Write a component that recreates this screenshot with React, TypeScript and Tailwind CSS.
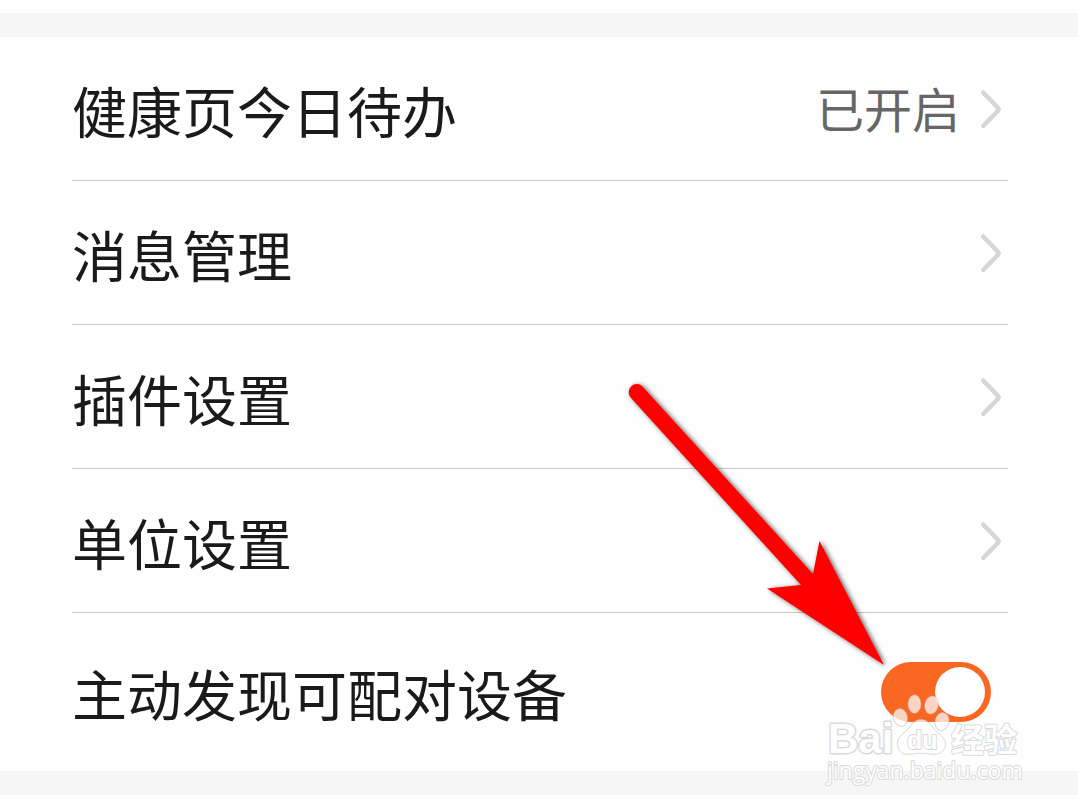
import { useState } from "react";

interface SettingRowProps {
  label: string;
  value?: string;
}

const settings: SettingRowProps[] = [
  { label: "健康页今日待办", value: "已开启" },
  { label: "消息管理" },
  { label: "插件设置" },
  { label: "单位设置" },
];

function Chevron() {
  return (
    <svg
      className="mr-1 h-11 w-7 shrink-0"
      viewBox="0 0 28 44"
      fill="none"
      stroke="#d6d6d6"
      strokeWidth="4.5"
      strokeLinecap="round"
      strokeLinejoin="round"
      aria-hidden="true"
    >
      <path d="M7.2 5.5 L21.8 20.6 Q23.4 22.3 21.8 24 L7.2 39" />
    </svg>
  );
}

function SettingRow({ label, value }: SettingRowProps) {
  return (
    <li className="border-b border-[#c9c9c9]">
      <button
        type="button"
        className="flex h-[143px] w-full items-center justify-between text-left"
      >
        <span className="pt-2.5 text-[55px] leading-[72px]">{label}</span>
        <span className="flex items-center gap-4">
          {value && (
            <span className="pt-1.5 text-[48px] leading-[64px] text-[#666666]">
              {value}
            </span>
          )}
          <Chevron />
        </span>
      </button>
    </li>
  );
}

function Arrow() {
  return (
    <svg
      className="pointer-events-none absolute top-[376px] right-[182px] h-[300px] w-[280px]"
      viewBox="616 376 280 300"
      aria-hidden="true"
    >
      <defs>
        <filter id="arrow-shadow" x="-10%" y="-10%" width="120%" height="120%">
          <feDropShadow dx="2" dy="1" stdDeviation="2.5" floodColor="#000" floodOpacity="0.65" />
        </filter>
      </defs>
      <path
        d="M642.5 386.5 L813 574 L819.5 541 L884 665 L767 588.5 L801 585 L631 398 A7.6 7.6 0 0 1 642.5 386.5 Z"
        fill="#fe0000"
        filter="url(#arrow-shadow)"
      />
    </svg>
  );
}

function Watermark() {
  return (
    <svg
      className="pointer-events-none absolute top-[688px] right-[50px] h-[104px] w-[208px]"
      viewBox="820 688 208 104"
      aria-hidden="true"
    >
      <g fill="#ffffff" fillOpacity="0.72" stroke="#b4b4b4" strokeOpacity="0.5">
        <ellipse cx="900.5" cy="717.5" rx="7" ry="9" transform="rotate(-12 900.5 717.5)" />
        <ellipse cx="914.5" cy="704" rx="6.5" ry="9.2" />
        <ellipse cx="931.5" cy="705" rx="6.8" ry="9.2" transform="rotate(12 931.5 705)" />
        <ellipse cx="942" cy="721.5" rx="7" ry="9" transform="rotate(12 942 721.5)" />
        <path d="M921 719.5 C913 719.5 911 727 905 732 C899 737 896 741 898 747 C900 754 906 755 912 754 C918 753 924 753 930 754 C937 755 943 754 945 747 C947 741 943 737 937 732 C932 727 929 719.5 921 719.5 Z" />
      </g>
      {/* halo sits behind the white letters */}
      <g
        fill="#fefefe"
        stroke="#dadada"
        strokeWidth="3"
        strokeLinejoin="round"
        paintOrder="stroke"
        fontFamily="'Liberation Sans', Arial, sans-serif"
      >
        <text x="828" y="753" fontSize="42" fontWeight="bold">
          Bai
        </text>
        <text x="907" y="749" fontSize="25" fontWeight="bold" strokeWidth="2">
          du
        </text>
        <text
          x="951"
          y="752"
          fontSize="33"
          fontWeight="bold"
          strokeWidth="2"
          fontFamily="'Noto Sans CJK SC', sans-serif"
        >
          经验
        </text>
        <text
          x="827"
          y="779"
          fontSize="23"
          strokeWidth="2"
          fontFamily="'Open Sans', sans-serif"
        >
          jingyan.baidu.com
        </text>
      </g>
    </svg>
  );
}

export default function App() {
  const [discover, setDiscover] = useState(true);

  return (
    <main className="relative min-h-screen overflow-hidden bg-[#fefefe] pt-[13px] font-['Liberation_Sans','Noto_Sans_CJK_SC',sans-serif] text-[#1a1a1a]">
      <div className="h-6 bg-[#f6f6f6]" />
      <ul className="pr-[70px] pl-[72px]">
        {settings.map((item) => (
          <SettingRow key={item.label} {...item} />
        ))}
        <li className="flex h-[158px] items-center justify-between">
          <label htmlFor="discover" className="pt-2.5 text-[55px] leading-[72px]">
            主动发现可配对设备
          </label>
          <input
            id="discover"
            type="checkbox"
            role="switch"
            checked={discover}
            onChange={(e) => setDiscover(e.target.checked)}
            className="mr-[17px] flex h-[60px] w-[110px] cursor-pointer appearance-none items-center rounded-full bg-gray-300 px-1.5 before:size-[50px] before:rounded-full before:bg-white before:content-[''] checked:justify-end checked:bg-[#fa6723]"
          />
        </li>
      </ul>
      <div className="h-6 bg-[#f6f6f6]" />
      <Arrow />
      <Watermark />
    </main>
  );
}
